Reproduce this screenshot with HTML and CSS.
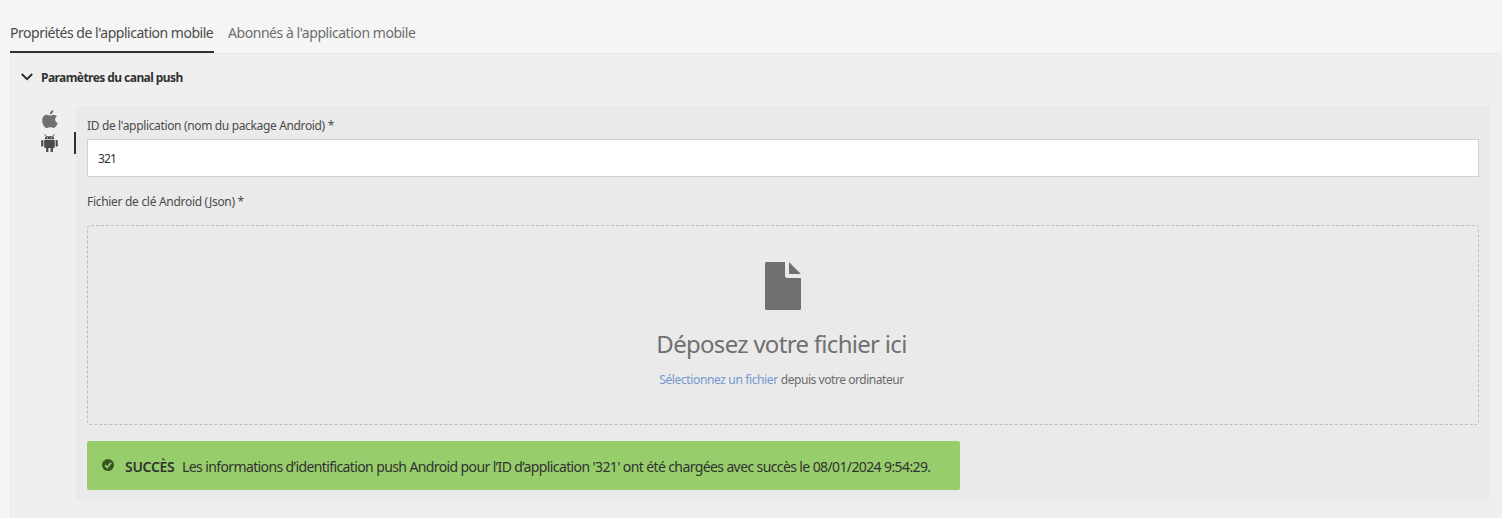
FILE: index.html
```html
<!DOCTYPE html>
<html lang="fr">
<head>
<meta charset="utf-8">
<title>Application mobile</title>
<link rel="stylesheet" href="styles.css">
</head>
<body>
<nav class="tabs">
  <a class="tab tab-active">Propriétés de l'application mobile</a>
  <a class="tab tab-second">Abonnés à l'application mobile</a>
</nav>
<main class="panel">
  <header class="section-head">
    <svg class="chevron" viewBox="0 0 12 8"><path d="M.8 1 6 6.2 11.2 1" fill="none" stroke="#2c2c2c" stroke-width="2"/></svg>
    <h2 class="section-title">Paramètres du canal push</h2>
  </header>
  <div class="content">
    <div class="platforms">
      <div class="platform">
        <svg class="apple" viewBox="0 0 16 18"><path fill="#707070" d="M11.4 0C11.5 2.4 9.8 4.3 7.8 4.3 7.6 2.3 9.5 .3 11.4 0ZM8 5.6C8.9 5.6 9.9 4.7 11.4 4.7 12.9 4.7 14.2 5.4 14.9 6.5 12.2 8 12.5 11.8 15.8 13 14.9 15.4 13.2 18 11.5 18 10.3 18 9.7 17.3 8.3 17.3 6.8 17.3 6.2 18 5 18 2.8 18 .2 14 .2 10.4.2 6.8 2.4 4.8 4.7 4.8 6.1 4.8 7.2 5.6 8 5.6Z"/></svg>
      </div>
      <div class="platform platform-active">
        <svg class="android" viewBox="0 0 17 18"><g fill="#4b4b4b"><path d="M4 5.3V4.2Q4 2.8 5.3 2.3H11.7Q13 2.8 13 4.2V5.3ZM6 3.3V4.3H7V3.3ZM10 3.3V4.3H11V3.3Z" fill-rule="evenodd"/><path d="M3.5.4 5.7 2.8M13.5.4 11.3 2.8" stroke="#4b4b4b" stroke-width="1"/><path d="M3.2 6.1H13.8V13Q13.8 14 12.8 14H11.9V18H9.6V14H7.4V18H5.1V14H4.2Q3.2 14 3.2 13Z"/><rect x=".2" y="6" width="2.2" height="6.6" rx=".9"/><rect x="14.6" y="6" width="2.2" height="6.6" rx=".9"/></g></svg>
      </div>
    </div>
    <section class="card">
      <label class="label label-id" for="app-id">ID de l'application (nom du package Android) *</label>
      <input class="field" id="app-id" type="text" value="321">
      <div class="label label-file">Fichier de clé Android (Json) *</div>
      <div class="dropzone">
        <svg class="file" viewBox="0 0 36 48"><path fill="#707070" d="M1.5 0H20V13.5Q20 16 22.5 16H36V46.5Q36 48 34.5 48H1.5Q0 48 0 46.5V1.5Q0 0 1.5 0ZM24 0 36 12H24Z"/></svg>
        <div class="drop-title">Déposez votre fichier ici</div>
        <div class="drop-hint"><a class="link">Sélectionnez un fichier</a><span class="rest">depuis votre ordinateur</span></div>
      </div>
      <div class="alert">
        <svg class="check" viewBox="0 0 12 12"><circle cx="6" cy="6" r="6" fill="#38541f"/><path d="M3 6.2 5.2 8.4 9.1 3.8" fill="none" stroke="#98cd6b" stroke-width="1.7"/></svg>
        <strong class="alert-title">SUCCÈS</strong>
        <span class="alert-text">Les informations d’identification push Android pour l’ID d’application '321' ont été chargées avec succès le 08/01/2024 9:54:29.</span>
      </div>
    </section>
  </div>
</main>
</body>
</html>
```
FILE: styles.css
```css
* { box-sizing: border-box; }
body {
  margin: 0;
  height: 518px;
  overflow: hidden;
  display: flex;
  flex-direction: column;
  background: #f5f5f5;
  color: #4b4b4b;
  font-family: "Noto Sans", sans-serif;
  font-size: 12px;
  white-space: nowrap;
}
.tabs { display: flex; gap: 14px; height: 53px; padding: 13px 0 0 10px; flex: none; font-size: 14px; }
.tab { height: 40px; line-height: 40px; color: #6e6e6e; }
.tab-active { width: 204px; color: #4b4b4b; border-bottom: 2px solid #323232; letter-spacing: -0.48px; }
.tab-second { letter-spacing: -0.45px; }
.panel {
  flex: 1;
  margin-left: 10px;
  padding: 0 12px 0 10px;
  background: #efefef;
  border: solid #eaeaea;
  border-width: 1px 0 0 1px;
}
.section-head { display: flex; align-items: center; height: 42px; padding-top: 6px; border-bottom: 1px solid #eaeaea; }
.chevron { width: 12px; height: 8px; margin: -2px 8px 0 0; }
.section-title { margin: 0; font-size: 12px; line-height: 18px; font-weight: 700; letter-spacing: -0.56px; color: #323232; }
.content { display: flex; padding-top: 10px; }
.platforms { width: 55px; padding-top: 2px; }
.platform { height: 24px; width: 55px; padding: 2px 0 0 21px; }
.platform-active { height: 22px; border-right: 2px solid #323232; }
.apple { display: block; width: 16px; height: 18px; }
.android { display: block; width: 17px; height: 18px; margin-left: -1px; }
.card { flex: 1; height: 395px; padding: 11px; background: #eaeaea; border-radius: 4px; }
.label { display: block; line-height: 18px; }
.label-id { letter-spacing: -0.35px; }
.label-file { margin-top: 16px; letter-spacing: -0.3px; }
.field {
  display: block;
  width: 100%;
  height: 38px;
  margin-top: 4px;
  padding: 0 10px;
  border: 1px solid #d0d0d0;
  background: #fff;
  color: #323232;
  font: 12px "Noto Sans", sans-serif;
  letter-spacing: -0.9px;
}
.dropzone {
  display: flex;
  flex-direction: column;
  align-items: center;
  height: 200px;
  margin-top: 14px;
  padding-top: 36px;
  border: 1px dashed #bcbcbc;
  border-radius: 4px;
}
.file { width: 36px; height: 48px; }
.drop-title { margin-top: 16px; padding-right: 3px; font-size: 24px; line-height: 36px; letter-spacing: -0.7px; color: #707070; }
.drop-hint { display: flex; gap: 3px; margin-top: 9px; padding-right: 3px; line-height: 18px; color: #6a6a6a; }
.link { color: #7396cd; letter-spacing: -0.37px; }
.rest { letter-spacing: -0.45px; }
.alert {
  display: flex;
  align-items: center;
  width: 873px;
  height: 49px;
  margin-top: 16px;
  padding: 1px 15px 0;
  background: #98cd6b;
  border-radius: 2px;
  color: #323232;
  font-size: 14px;
}
.check { width: 12px; height: 12px; margin: -2px 11px 0 0; }
.alert-title { width: 57px; font-weight: 600; letter-spacing: -0.3px; }
.alert-text { letter-spacing: -0.61px; }
```
